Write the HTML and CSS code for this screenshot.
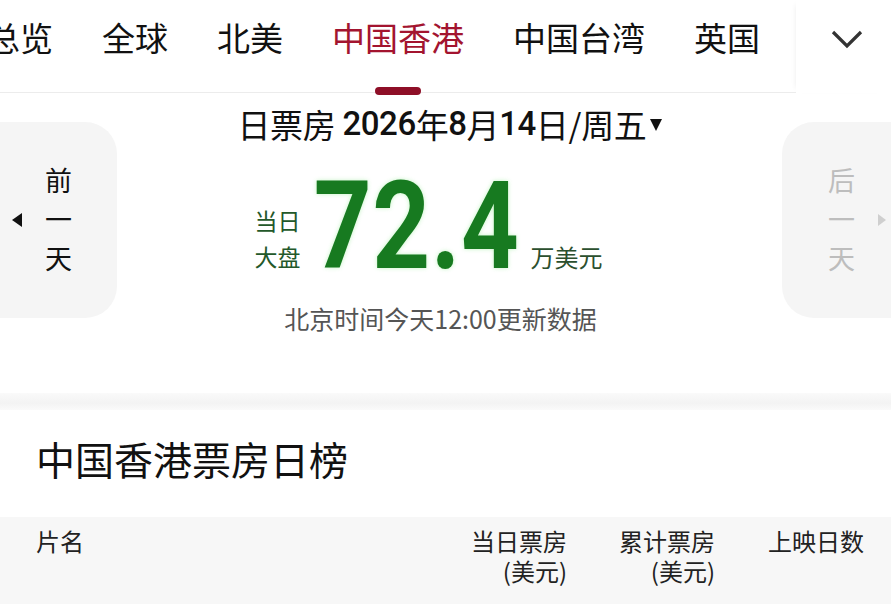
FILE: index.html
```
<!DOCTYPE html>
<html lang="zh-CN">
<head>
<meta charset="utf-8">
<title>中国香港票房日榜</title>
<link rel="stylesheet" href="styles.css">
</head>
<body>
<div class="page">
  <header class="tabbar">
    <nav class="tabs">
      <span class="tab">总览</span>
      <span class="tab">全球</span>
      <span class="tab">北美</span>
      <span class="tab active">中国香港<i class="indicator"></i></span>
      <span class="tab">中国台湾</span>
      <span class="tab">英国</span>
    </nav>
    <div class="more">
      <svg width="32" height="20" viewBox="0 0 32 20"><path d="M2 3 L16 17 L30 3" fill="none" stroke="#333" stroke-width="3.2" stroke-linejoin="miter"/></svg>
    </div>
  </header>

  <section class="hero">
    <div class="daybtn prev">
      <span class="tri tri-left"></span>
      <span class="vtext">前<br>一<br>天</span>
    </div>
    <div class="center">
      <div class="date">日票房 <b>2026</b>年<b>8</b>月<b>14</b>日/周五<span class="caret"></span></div>
      <div class="total">
        <div class="lbl">当日<br>大盘</div>
        <div class="num"><span>72.4</span></div>
        <div class="unit">万美元</div>
      </div>
      <div class="update">北京时间今天12:00更新数据</div>
    </div>
    <div class="daybtn next">
      <span class="vtext">后<br>一<br>天</span>
      <span class="tri tri-right"></span>
    </div>
  </section>

  <div class="sep"></div>

  <section class="board">
    <h2 class="title">中国香港票房日榜</h2>
    <div class="thead">
      <div class="th name"><span class="ln">片名</span></div>
      <div class="th"><span class="ln">当日票房</span><span class="ln">(美元)</span></div>
      <div class="th"><span class="ln">累计票房</span><span class="ln">(美元)</span></div>
      <div class="th"><span class="ln">上映日数</span></div>
    </div>
  </section>
</div>
</body>
</html>
```
FILE: styles.css
```
* { box-sizing: border-box; margin: 0; padding: 0; }
html, body { background: #fff; }
body {
  font-family: "Noto Sans CJK SC", "Noto Sans", sans-serif;
  color: #111;
  overflow: hidden;
}
.page { width: 891px; height: 604px; overflow: hidden; }

.tabbar {
  display: flex;
  height: 93px;
}
.tabs {
  width: 809px;
  flex: none;
  display: flex;
  gap: 49px;
  margin-left: -13px;
  border-bottom: 1px solid #ececec;
  white-space: nowrap;
}
.tab {
  position: relative;
  font-size: 33px;
  line-height: 33px;
  padding-top: 21px;
  color: #111;
  flex: none;
}
.tab.active { color: #a3142f; }
.indicator {
  position: absolute;
  left: 50%;
  bottom: -3px;
  width: 46px;
  height: 8px;
  margin-left: -23px;
  border-radius: 4px;
  background: #8e0f27;
}
.more {
  flex: 1;
  display: flex;
  justify-content: flex-start;
  padding-left: 35px;
  padding-top: 29px;
  box-shadow: -4px 0 6px -5px rgba(0,0,0,0.10);
  position: relative;
  z-index: 1;
  background: #fff;
}

.hero {
  display: grid;
  grid-template-columns: 117px 1fr 109px;
  height: 300px;
  padding-top: 29px;
}
.daybtn {
  height: 196px;
  background: #f5f5f5;
  display: flex;
  align-items: center;
}
.prev {
  border-radius: 0 32px 32px 0;
  padding-left: 12px;
  gap: 23px;
}
.next {
  border-radius: 32px 0 0 32px;
  padding-left: 46px;
  gap: 23px;
  color: #bdbdbd;
}
.vtext {
  font-size: 27px;
  line-height: 39px;
  margin-top: -4px;
}
.tri { width: 0; height: 0; border-top: 7px solid transparent; border-bottom: 7px solid transparent; }
.tri-left { border-right: 10px solid #111; }
.tri-right { border-left: 8px solid #cfcfcf; border-top-width: 6px; border-bottom-width: 6px; }

.center {
  display: flex;
  flex-direction: column;
  align-items: center;
  margin-top: -19px;
}
.date {
  font-size: 33px;
  line-height: 42px;
  letter-spacing: -0.3px;
  display: flex;
  align-items: center;
  white-space: pre;
}
.date b { font-weight: 500; font-family: "Roboto", "Noto Sans CJK SC", sans-serif; letter-spacing: -0.5px; }
.caret {
  width: 0; height: 0;
  border-left: 6px solid transparent;
  border-right: 6px solid transparent;
  border-top: 12px solid #111;
  margin-left: 3px;
  margin-top: 2px;
}
.total {
  display: flex;
  align-items: flex-end;
  margin-top: 33px;
  margin-left: -42px;
}
.lbl {
  font-size: 23px;
  line-height: 36px;
  color: #23582a;
  margin-bottom: -2px;
}
.num {
  width: 204px;
  margin: 0 12px 0 14px;
  display: flex;
  justify-content: center;
}
.num span {
  display: inline-block;
  font-family: "Roboto", "Liberation Sans", sans-serif;
  font-weight: 700;
  font-size: 123px;
  line-height: 96px;
  height: 94px;
  color: #177a20;
  transform: scaleX(0.82);
  text-shadow: 0 0 5px rgba(120, 230, 120, 0.45);
  letter-spacing: 1px;
}
.unit {
  font-size: 24px;
  line-height: 30px;
  color: #2b4f2e;
}
.update {
  font-size: 25px;
  line-height: 34px;
  color: #555;
  margin-top: 29px;
  margin-left: -18px;
}

.sep {
  height: 17px;
  background: linear-gradient(#fafafa, #f3f3f3 60%, #fafafa);
}

.title {
  font-size: 39px;
  line-height: 42px;
  font-weight: 400;
  color: #111;
  padding: 27px 0 38px 36px;
}
.thead {
  display: grid;
  grid-template-columns: 1fr 148px 148px 149px;
  padding: 9px 27px 18px 36px;
  background: #f7f7f7;
  height: 90px;
}
.th {
  font-size: 24px;
  line-height: 30px;
  color: #222;
  display: flex;
  flex-direction: column;
  align-items: flex-end;
}
.th.name { align-items: flex-start; }
.ln { display: block; height: 30px; white-space: nowrap; }
```
